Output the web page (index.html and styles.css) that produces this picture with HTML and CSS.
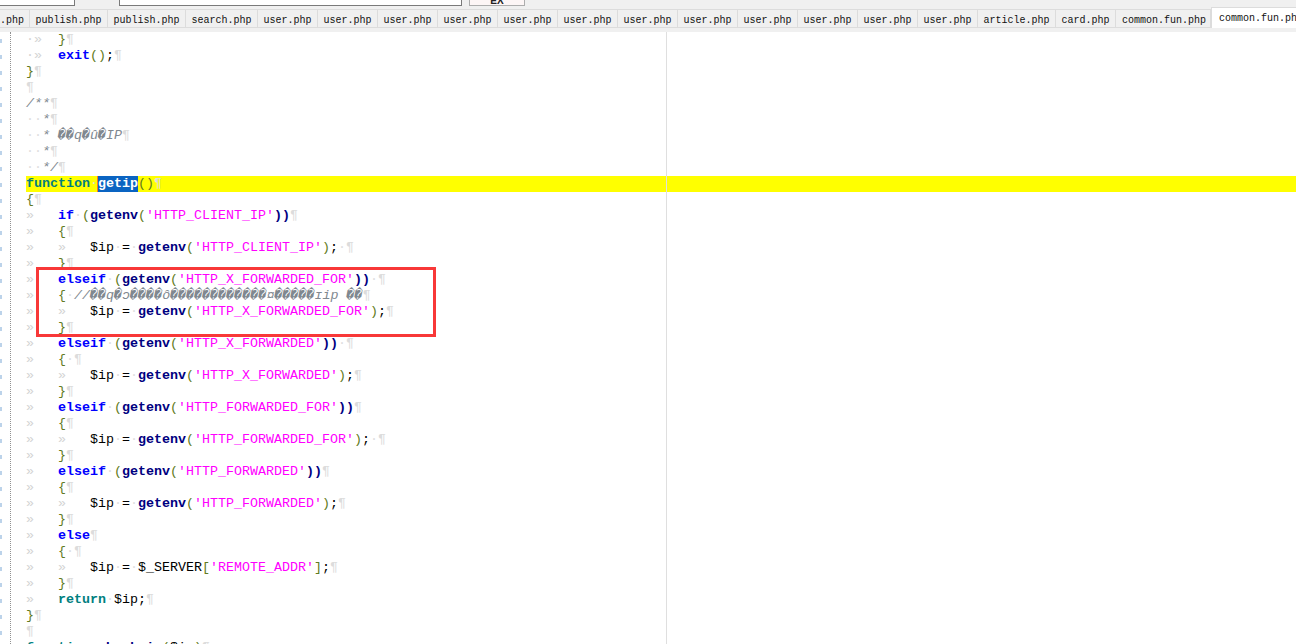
FILE: index.html
```html
<!DOCTYPE html>
<html lang="zh">
<head>
<meta charset="utf-8">
<title>common.fun.php</title>
<link rel="stylesheet" href="styles.css">
</head>
<body>
<div class="app">
  <div class="toolbar">
    <div class="box box-a"></div>
    <div class="box box-b"></div>
    <div class="btn">EX</div>
  </div>
  <div class="tabs">
    <div class="tab w30">.php</div>
    <div class="tab w78">publish.php</div>
    <div class="tab w78">publish.php</div>
    <div class="tab w72">search.php</div>
    <div class="tab w60">user.php</div>
    <div class="tab w60">user.php</div>
    <div class="tab w60">user.php</div>
    <div class="tab w60">user.php</div>
    <div class="tab w60">user.php</div>
    <div class="tab w60">user.php</div>
    <div class="tab w60">user.php</div>
    <div class="tab w60">user.php</div>
    <div class="tab w60">user.php</div>
    <div class="tab w60">user.php</div>
    <div class="tab w60">user.php</div>
    <div class="tab w60">user.php</div>
    <div class="tab w78">article.php</div>
    <div class="tab w60">card.php</div>
    <div class="tab w95">common.fun.php</div>
    <div class="tab active">common.fun.php</div>
  </div>
  <div class="strip"></div>
  <div class="editor">
    <div class="gutter"></div>
    <div class="code">
<div class="ln"><span class="tab-ws">·»</span><span class="o">}</span><span class="p">¶</span></div>
<div class="ln"><span class="tab-ws">·»</span><span class="k">exit</span><span class="o">()</span>;<span class="p">¶</span></div>
<div class="ln"><span class="o">}</span><span class="p">¶</span></div>
<div class="ln"><span class="p">¶</span></div>
<div class="ln"><span class="c">/**</span><span class="p">¶</span></div>
<div class="ln"><span class="w">··</span><span class="c">*</span><span class="p">¶</span></div>
<div class="ln"><span class="w">··</span><span class="c">* ��q�û�IP</span><span class="p">¶</span></div>
<div class="ln"><span class="w">··</span><span class="c">*</span><span class="p">¶</span></div>
<div class="ln"><span class="w">··</span><span class="c">*/</span><span class="p">¶</span></div>
<div class="ln hl"><span class="t">function</span><span class="w">·</span><span class="sel">getip</span><span class="o">()</span><span class="p">¶</span></div>
<div class="ln"><span class="o">{</span><span class="p">¶</span></div>
<div class="ln"><span class="tab-ws">»</span><span class="k">if</span><span class="w">·</span><span class="o">(</span><span class="f">getenv</span><span class="o">(</span><span class="s">'HTTP_CLIENT_IP'</span><span class="f">))</span><span class="p">¶</span></div>
<div class="ln"><span class="tab-ws">»</span><span class="o">{</span><span class="p">¶</span></div>
<div class="ln"><span class="tab-ws">»</span><span class="tab-ws">»</span>$ip<span class="w">·</span>=<span class="w">·</span><span class="f">getenv</span><span class="o">(</span><span class="s">'HTTP_CLIENT_IP'</span><span class="o">)</span>;<span class="w">·</span><span class="p">¶</span></div>
<div class="ln"><span class="tab-ws">»</span><span class="o">}</span><span class="p">¶</span></div>
<div class="ln"><span class="tab-ws">»</span><span class="k">elseif</span><span class="w">·</span><span class="o">(</span><span class="f">getenv</span><span class="o">(</span><span class="s">'HTTP_X_FORWARDED_FOR'</span><span class="f">))</span><span class="w">·</span><span class="p">¶</span></div>
<div class="ln"><span class="tab-ws">»</span><span class="o">{</span><span class="w">·</span><span class="c">//��q�ɔ����ô������������¤�����ɪip ��</span><span class="p">¶</span></div>
<div class="ln"><span class="tab-ws">»</span><span class="tab-ws">»</span>$ip<span class="w">·</span>=<span class="w">·</span><span class="f">getenv</span><span class="o">(</span><span class="s">'HTTP_X_FORWARDED_FOR'</span><span class="o">)</span>;<span class="p">¶</span></div>
<div class="ln"><span class="tab-ws">»</span><span class="o">}</span><span class="p">¶</span></div>
<div class="ln"><span class="tab-ws">»</span><span class="k">elseif</span><span class="w">·</span><span class="o">(</span><span class="f">getenv</span><span class="o">(</span><span class="s">'HTTP_X_FORWARDED'</span><span class="f">))</span><span class="w">·</span><span class="p">¶</span></div>
<div class="ln"><span class="tab-ws">»</span><span class="o">{</span><span class="w">·</span><span class="p">¶</span></div>
<div class="ln"><span class="tab-ws">»</span><span class="tab-ws">»</span>$ip<span class="w">·</span>=<span class="w">·</span><span class="f">getenv</span><span class="o">(</span><span class="s">'HTTP_X_FORWARDED'</span><span class="o">)</span>;<span class="p">¶</span></div>
<div class="ln"><span class="tab-ws">»</span><span class="o">}</span><span class="p">¶</span></div>
<div class="ln"><span class="tab-ws">»</span><span class="k">elseif</span><span class="w">·</span><span class="o">(</span><span class="f">getenv</span><span class="o">(</span><span class="s">'HTTP_FORWARDED_FOR'</span><span class="f">))</span><span class="p">¶</span></div>
<div class="ln"><span class="tab-ws">»</span><span class="o">{</span><span class="p">¶</span></div>
<div class="ln"><span class="tab-ws">»</span><span class="tab-ws">»</span>$ip<span class="w">·</span>=<span class="w">·</span><span class="f">getenv</span><span class="o">(</span><span class="s">'HTTP_FORWARDED_FOR'</span><span class="o">)</span>;<span class="w">·</span><span class="p">¶</span></div>
<div class="ln"><span class="tab-ws">»</span><span class="o">}</span><span class="p">¶</span></div>
<div class="ln"><span class="tab-ws">»</span><span class="k">elseif</span><span class="w">·</span><span class="o">(</span><span class="f">getenv</span><span class="o">(</span><span class="s">'HTTP_FORWARDED'</span><span class="f">))</span><span class="p">¶</span></div>
<div class="ln"><span class="tab-ws">»</span><span class="o">{</span><span class="p">¶</span></div>
<div class="ln"><span class="tab-ws">»</span><span class="tab-ws">»</span>$ip<span class="w">·</span>=<span class="w">·</span><span class="f">getenv</span><span class="o">(</span><span class="s">'HTTP_FORWARDED'</span><span class="o">)</span>;<span class="p">¶</span></div>
<div class="ln"><span class="tab-ws">»</span><span class="o">}</span><span class="p">¶</span></div>
<div class="ln"><span class="tab-ws">»</span><span class="k">else</span><span class="p">¶</span></div>
<div class="ln"><span class="tab-ws">»</span><span class="o">{</span><span class="w">·</span><span class="p">¶</span></div>
<div class="ln"><span class="tab-ws">»</span><span class="tab-ws">»</span>$ip<span class="w">·</span>=<span class="w">·</span>$_SERVER<span class="o">[</span><span class="s">'REMOTE_ADDR'</span><span class="o">]</span>;<span class="p">¶</span></div>
<div class="ln"><span class="tab-ws">»</span><span class="o">}</span><span class="p">¶</span></div>
<div class="ln"><span class="tab-ws">»</span><span class="t">return</span><span class="w">·</span>$ip;<span class="p">¶</span></div>
<div class="ln"><span class="o">}</span><span class="p">¶</span></div>
<div class="ln"><span class="p">¶</span></div>
<div class="ln"><span class="t">function</span><span class="w">·</span><span class="f">check_ip</span><span class="o">(</span>$ip<span class="o">)</span><span class="p">¶</span></div>
    </div>
    <div class="edge"></div>
    <div class="mark"></div>
  </div>
</div>
</body>
</html>
```

FILE: styles.css
```css
html, body {
  margin: 0;
  padding: 0;
  background: #fff;
}
.app {
  width: 1296px;
  height: 644px;
  overflow: hidden;
  display: flex;
  flex-direction: column;
}
.toolbar {
  height: 9px;
  flex: none;
  background: #f0f0f0;
  display: flex;
  align-items: flex-start;
  overflow: hidden;
}
.box {
  height: 5px;
  background: #fff;
  border: 1px solid #7a7a7a;
  border-top: 0;
  box-sizing: content-box;
}
.box-a {
  width: 74px;
  border-left: 0;
}
.box-b {
  width: 341px;
  margin-left: 44px;
}
.btn {
  width: 54px;
  height: 5px;
  margin-left: 7px;
  border: 1px solid #adadad;
  border-top: 0;
  background: #fdf6f6;
  font: bold 10px/2px "Liberation Sans", sans-serif;
  text-align: center;
  color: #222;
  overflow: hidden;
}
.tabs {
  height: 19px;
  flex: none;
  background: #f0f0f0;
  display: flex;
  align-items: flex-end;
}
.tab {
  flex: none;
  box-sizing: border-box;
  height: 19px;
  padding-top: 3px;
  border-top: 1px solid #dcdcdc;
  border-right: 1px solid #dcdcdc;
  border-bottom: 1px solid #dcdcdc;
  font: 10px/15px "Liberation Mono", monospace;
  text-align: center;
  color: #111;
  white-space: nowrap;
}
.w30 { width: 30px; text-align: right; padding-right: 6px; }
.w60 { width: 60px; }
.w72 { width: 72px; }
.w78 { width: 78px; }
.w95 { width: 95px; text-align: left; padding-left: 6px; }
.tab.active {
  flex: 1;
  height: 21px;
  background: #fff;
  border: 0;
  border-top: 1px solid #dcdcdc;
  border-left: 1px solid #dcdcdc;
  padding-left: 7px;
  text-align: left;
  overflow: hidden;
}
.strip {
  height: 4px;
  flex: none;
  background: #f0f0f0;
}
.editor {
  flex: 1;
  min-height: 0;
  position: relative;
  display: flex;
  background: #fff;
}
.gutter {
  width: 10px;
  flex: none;
  border-right: 1px dotted #909090;
  background: repeating-linear-gradient(to bottom, #fff 0, #fff 7px, #bcd3ea 7px, #bcd3ea 11px, #fff 11px, #fff 16px) 0 0 / 2px 100% no-repeat;
}
.code {
  flex: 1;
  padding-left: 15px;
  font: 13.33px/16px "Liberation Mono", "DejaVu Sans Mono", monospace;
  color: #000;
}
.ln {
  height: 16px;
  white-space: pre;
}
.hl {
  background: #ffff00;
}
.tab-ws {
  display: inline-block;
  width: 32px;
  color: #d4d4d4;
}
.w { color: #dedede; }
.p { color: #dcdcdc; }
.k { color: #0000ff; font-weight: bold; }
.t { color: #008080; font-weight: bold; }
.f { color: #000080; font-weight: bold; }
.s { color: #ff00ff; }
.o { color: #5f7a20; }
.c { color: #808890; font-style: italic; }
.sel {
  display: inline-block;
  background: #0a64c2;
  color: #fff;
  font-weight: bold;
  box-shadow: -1px 0 0 #ff7a1a;
}
.edge {
  position: absolute;
  left: 666px;
  top: 0;
  bottom: 0;
  width: 1px;
  background: #dfdfdf;
}
.mark {
  position: absolute;
  left: 36px;
  top: 235px;
  width: 394px;
  height: 64px;
  border: 3px solid #f83838;
}
```
